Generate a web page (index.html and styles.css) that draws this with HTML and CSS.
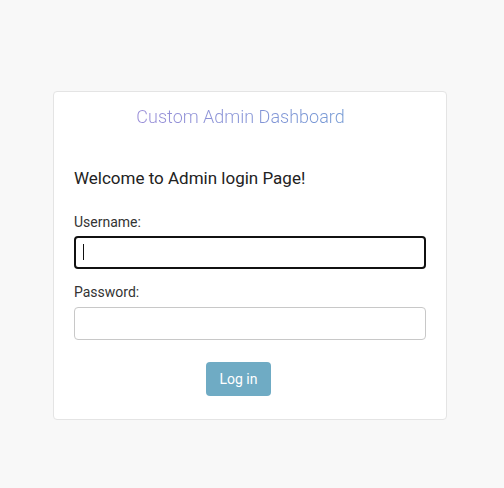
FILE: index.html
```html
<!DOCTYPE html>
<html>
<head>
<meta charset="utf-8">
<link rel="stylesheet" href="styles.css">
</head>
<body>
<div class="card">
  <h1 class="title"><span class="grad">Custom Admin Dashboard</span></h1>
  <h2 class="welcome">Welcome to Admin login Page!</h2>
  <form class="form">
    <label class="label" for="u">Username:</label>
    <div class="field">
      <input class="input focused" id="u" type="text">
      <span class="caret"></span>
    </div>
    <label class="label label-pw" for="p">Password:</label>
    <div class="field">
      <input class="input" id="p" type="password">
    </div>
    <div class="actions"><button class="btn" type="button">Log in</button></div>
  </form>
</div>
</body>
</html>
```
FILE: styles.css
```css
html, body { margin: 0; padding: 0; }
body {
  background: #f8f8f8;
  font-family: Roboto, "Liberation Sans", sans-serif;
  color: #222;
  height: 488px;
}
.card {
  box-sizing: border-box;
  margin: 91px 0 0 53px;
  width: 394px;
  height: 329px;
  background: #fff;
  border: 1px solid #e4e4e4;
  border-radius: 4px;
  padding: 14px 20px 0 20px;
}
.title {
  margin: 0;
  font-size: 18px;
  font-weight: 300;
  line-height: 22px;
  text-align: center;
  padding-right: 19px;
}
.grad {
  background: linear-gradient(to right, #9a8ed8, #8294d6 60%, #7499d4);
  -webkit-background-clip: text;
  background-clip: text;
  color: transparent;
}
.welcome {
  margin: 40px 0 0 0;
  font-size: 17px;
  font-weight: 400;
  line-height: 20px;
  color: #222;
}
.form { display: flex; flex-direction: column; margin-top: 26px; }
.label {
  font-size: 14px;
  line-height: 16px;
  color: #333;
  margin-bottom: 6px;
}
.label-pw { margin-bottom: 7px; }
.field {
  position: relative;
  width: 352px;
  height: 33px;
  margin: 0 0 15px 0;
}
.input {
  box-sizing: border-box;
  display: block;
  height: 33px;
  width: 352px;
  border: 1px solid #c8c8c8;
  border-radius: 4px;
  background: #fff;
  margin: 0;
  padding: 0 8px;
  font: inherit;
  outline: none;
}
.input.focused {
  border: 2px solid #111;
  border-radius: 4px;
}
.caret {
  position: absolute;
  left: 9px;
  top: 8px;
  width: 1px;
  height: 16px;
  background: #111;
}
.actions { display: flex; justify-content: center; margin-top: 7px; padding-right: 23px; }
.btn {
  height: 34px;
  width: 65px;
  border: none;
  border-radius: 4px;
  background: #6fabc4;
  color: #fff;
  font-family: inherit;
  font-size: 14px;
}
```
